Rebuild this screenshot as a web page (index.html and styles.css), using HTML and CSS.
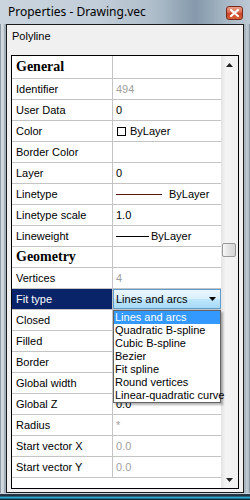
FILE: index.html
```html
<!DOCTYPE html>
<html lang="en">
<head>
    <meta charset="UTF-8">
    <meta name="viewport" content="width=device-width, initial-scale=1.0">
    <title>Properties - Drawing.vec</title>
    <link rel="stylesheet" href="styles.css">
</head>
<body>
    <div class="window">
        <div class="titlebar">
            <span class="title">Properties - Drawing.vec</span>
            <div class="close">
                <svg width="9" height="8" viewBox="0 0 9 8">
                    <path d="M1 1 L8 7 M8 1 L1 7" stroke="#fff" stroke-width="2.2" stroke-linecap="square"/>
                </svg>
            </div>
        </div>
        <div class="client">
            <div class="objtype">Polyline</div>
            <div class="grid">
                <div class="rows">
                    <div class="row cat first"><div class="name">General</div><div class="val"></div></div>
                    <div class="row"><div class="name">Identifier</div><div class="val muted">494</div></div>
                    <div class="row"><div class="name">User Data</div><div class="val">0</div></div>
                    <div class="row"><div class="name">Color</div><div class="val"><span class="swatch"></span>ByLayer</div></div>
                    <div class="row"><div class="name">Border Color</div><div class="val"></div></div>
                    <div class="row"><div class="name">Layer</div><div class="val">0</div></div>
                    <div class="row"><div class="name">Linetype</div><div class="val"><span class="ltype"></span>ByLayer</div></div>
                    <div class="row"><div class="name">Linetype scale</div><div class="val">1.0</div></div>
                    <div class="row"><div class="name">Lineweight</div><div class="val"><span class="lweight"></span>ByLayer</div></div>
                    <div class="row cat"><div class="name">Geometry</div><div class="val"></div></div>
                    <div class="row"><div class="name">Vertices</div><div class="val muted">4</div></div>
                    <div class="row selected">
                        <div class="name">Fit type</div>
                        <div class="val">
                            <div class="combo">
                                <span>Lines and arcs</span>
                                <svg width="7" height="4" viewBox="0 0 7 4"><path d="M0 0 H7 L3.5 4 Z" fill="#000"/></svg>
                            </div>
                            <div class="dropdown">
                                <div class="item active">Lines and arcs</div>
                                <div class="item">Quadratic B-spline</div>
                                <div class="item">Cubic B-spline</div>
                                <div class="item">Bezier</div>
                                <div class="item">Fit spline</div>
                                <div class="item">Round vertices</div>
                                <div class="item">Linear-quadratic curve</div>
                            </div>
                        </div>
                    </div>
                    <div class="row"><div class="name">Closed</div><div class="val"></div></div>
                    <div class="row"><div class="name">Filled</div><div class="val"></div></div>
                    <div class="row"><div class="name">Border</div><div class="val"></div></div>
                    <div class="row"><div class="name">Global width</div><div class="val"></div></div>
                    <div class="row"><div class="name">Global Z</div><div class="val">0.0</div></div>
                    <div class="row"><div class="name">Radius</div><div class="val muted">*</div></div>
                    <div class="row"><div class="name">Start vector X</div><div class="val muted">0.0</div></div>
                    <div class="row"><div class="name">Start vector Y</div><div class="val muted">0.0</div></div>
                </div>
                <div class="scrollbar">
                    <div class="sb-btn">
                        <svg width="7" height="4" viewBox="0 0 7 4"><path d="M0 4 H7 L3.5 0 Z" fill="#222"/></svg>
                    </div>
                    <div class="sb-track"><div class="sb-thumb"></div></div>
                    <div class="sb-btn">
                        <svg width="7" height="4" viewBox="0 0 7 4"><path d="M0 0 H7 L3.5 4 Z" fill="#222"/></svg>
                    </div>
                </div>
            </div>
        </div>
        <div class="bottom-frame"></div>
    </div>
</body>
</html>
```

FILE: styles.css
```css
body {
    margin: 0;
    font-family: "Liberation Sans", Arial, sans-serif;
    font-size: 11px;
    color: #000;
}
.window {
    width: 250px;
    height: 500px;
    box-sizing: border-box;
    padding: 0 6px;
    display: flex;
    flex-direction: column;
    background: linear-gradient(to right, #8f9aa5 0, #8f9aa5 1px, #d3dbe2 1px, #c8d2db 4px, #7d8a96 5px, #c6d0d9 6px, #c6d0d9 244px, #8d9aa6 245px, #c3cdd6 246px, #aeb9c4 249px, #6f7c88 250px);
}
.titlebar {
    height: 24px;
    margin: 0 -6px;
    padding: 0 7px 0 8px;
    display: flex;
    align-items: center;
    justify-content: space-between;
    background: linear-gradient(to right, #c9d4de 0, #c1cdd8 40%, #aebdca 62%, #8499ab 78%, #a6b6c4 90%, #bdc9d4 100%);
}
.title {
    font-family: "Noto Sans", sans-serif;
    font-size: 12px;
    color: #000;
    margin-top: -1px;
}
.close {
    width: 17px;
    height: 14px;
    box-sizing: border-box;
    border: 1px solid #7a2a1a;
    border-radius: 3px;
    background: linear-gradient(to bottom, #eaa08c 0, #dc6a4e 45%, #c84226 55%, #d9643c 100%);
    display: flex;
    align-items: center;
    justify-content: center;
    margin-top: 2px;
}
.client {
    height: 469px;
    box-sizing: border-box;
    border: 1px solid #1b1b1b;
    background-color: #f0f0f0;
    padding: 0 4px 0 4px;
    display: flex;
    flex-direction: column;
}
.objtype {
    height: 22px;
    line-height: 22px;
    padding-left: 1px;
    margin-bottom: 8px;
}
.grid {
    height: 434px;
    box-sizing: border-box;
    border: 1px solid #000;
    background-color: #fff;
    display: flex;
}
.rows {
    width: 209px;
    display: flex;
    flex-direction: column;
}
.row {
    display: grid;
    grid-template-columns: 101px 1fr;
    height: 20px;
    border-bottom: 1px solid #c4c4c4;
    line-height: 20px;
}
.row .name {
    border-right: 1px solid #c4c4c4;
    padding-left: 4px;
    white-space: nowrap;
}
.row .val {
    padding-left: 3px;
    white-space: nowrap;
    display: flex;
    align-items: center;
    position: relative;
}
.row.cat {
    height: 20px;
    font-family: "Liberation Serif", "Times New Roman", serif;
    font-weight: bold;
    font-size: 14px;
}
.row.cat.first {
    height: 22px;
    line-height: 22px;
}
.muted {
    color: #a0a0a0;
}
.swatch {
    width: 7px;
    height: 7px;
    border: 1px solid #000;
    background-color: #fff;
    margin: 1px 4px 0 1px;
}
.ltype {
    width: 46px;
    height: 1px;
    background-color: #5a1414;
    margin-right: 7px;
}
.lweight {
    width: 33px;
    height: 1px;
    background-color: #000;
    margin-right: 2px;
}
.row.selected .name {
    background-color: #0a246a;
    color: #fff;
}
.row.selected .val {
    padding-left: 0;
}
.combo {
    flex: 1;
    height: 20px;
    box-sizing: border-box;
    border: 1px solid #5f9cc9;
    background: linear-gradient(to bottom, #eaf6fd 0, #d9f0fc 50%, #bee6fd 51%, #a7d9f5 100%);
    display: flex;
    align-items: center;
    justify-content: space-between;
    padding: 0 4px 0 2px;
}
.dropdown {
    position: absolute;
    left: 0;
    top: 21px;
    width: 108px;
    box-sizing: border-box;
    border: 1px solid #646464;
    background-color: #fff;
    box-shadow: 2px 2px 2px rgba(0, 0, 0, 0.3);
    z-index: 2;
}
.item {
    height: 13px;
    line-height: 13px;
    padding-left: 1px;
}
.item.active {
    background-color: #3399ff;
    color: #fff;
}
.scrollbar {
    width: 17px;
    display: flex;
    flex-direction: column;
    background: linear-gradient(to right, #e4e4e4, #f4f4f4 30%, #f0f0f0);
}
.sb-btn {
    height: 17px;
    display: flex;
    align-items: center;
    justify-content: center;
}
.sb-track {
    flex: 1;
    padding-top: 170px;
}
.sb-thumb {
    width: 14px;
    height: 14px;
    margin-left: 1px;
    box-sizing: border-box;
    border: 1px solid #999;
    border-radius: 2px;
    background: linear-gradient(to right, #f6f6f6, #e2e2e2 50%, #d4d4d4);
}
.bottom-frame {
    height: 7px;
    margin: 0 -6px;
    background: linear-gradient(to bottom, #c6d0d9 0, #c6d0d9 1px, #2c3c4c 1px, #1c2c3c 3px, #2a9cc4 4px, #34b0d6 5px, #103048 6px, #0a1a28 7px);
}
```
